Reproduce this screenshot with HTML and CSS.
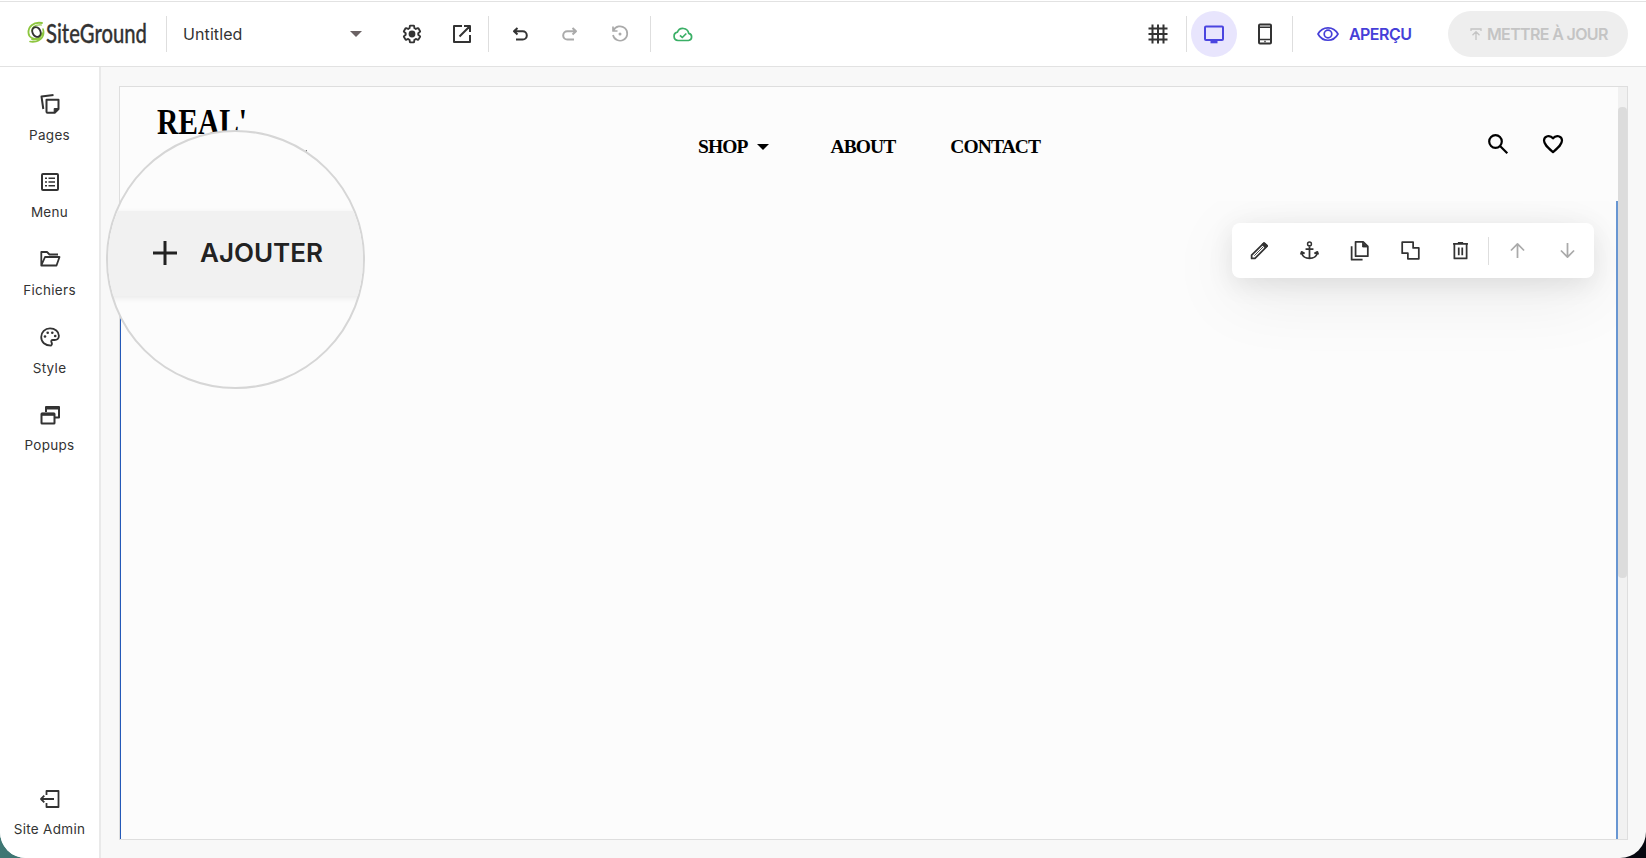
FILE: index.html
```html
<!DOCTYPE html>
<html lang="fr">
  <head>
    <meta charset="UTF-8" />
    <meta name="viewport" content="width=device-width, initial-scale=1.0" />
    <title>SiteGround - Untitled</title>
    <link rel="stylesheet" href="styles.css">
  </head>
  <body>
    <div class="window">
      <header class="topbar">
        <svg class="logo" width="122" height="36" viewBox="0 -2 122 36">
          <g fill="none" stroke-linecap="round">
            <path d="M16 5C7 3.500 2 9 2.500 15c.4 5 6 7 10 5" stroke="#8dc63f" stroke-width="1.800" />
            <path d="M15.500 7C9 6.500 6 9 5.500 13" stroke="#8dc63f" stroke-width="1.200" />
            <path d="M17 11c2 6-1 11-7 12.500-2.500.6-4.500.5-6 0M16 15c-1 5-5 7-10 6.500" stroke="#8dc63f" stroke-width="1.600" />
            <ellipse cx="10.500" cy="14" rx="4" ry="5" transform="rotate(-25 10.500 14)" stroke="#333" stroke-width="1.900" />
          </g>
          <text x="20" y="25" class="logo-text" textLength="101" lengthAdjust="spacingAndGlyphs">SiteGround</text>
        </svg>
        <span class="divider"></span>
        <div class="page-select">
          <span>Untitled</span>
          <svg width="12" height="6" viewBox="0 0 12 6"><path d="M0 0h12L6 6z" fill="#6b6264" /></svg>
        </div>
        <button class="tool">
          <svg class="icon" viewBox="0 0 24 24"><path transform="translate(1.900 1.900) scale(.84)" stroke-width="2.200" d="M19.430 12.980c.04-.32.07-.64.07-.98 0-.34-.03-.66-.07-.98l2.110-1.650c.19-.15.24-.42.12-.64l-2-3.460a.5.5 0 0 0-.61-.22l-2.490 1c-.52-.4-1.080-.73-1.690-.98l-.38-2.650A.488.488 0 0 0 14 2h-4c-.25 0-.46.18-.49.42l-.38 2.650c-.61.25-1.170.59-1.690.98l-2.490-1a.5.5 0 0 0-.61.220l-2 3.460c-.13.22-.07.49.12.64l2.110 1.650c-.04.32-.07.65-.07.98 0 .33.03.66.07.98l-2.110 1.650c-.19.15-.24.42-.12.64l2 3.460a.5.5 0 0 0 .61.22l2.490-1c.52.4 1.080.73 1.690.98l.38 2.650c.03.24.24.42.49.42h4c.25 0 .46-.18.49-.42l.38-2.650c.61-.25 1.170-.59 1.690-.98l2.490 1a.5.5 0 0 0 .61-.22l2-3.460c.12-.22.07-.49-.12-.64z" /><circle cx="12" cy="12" r="3.400" fill="currentColor" stroke="none" /></svg>
        </button>
        <button class="tool">
          <svg class="icon" viewBox="0 0 24 24"><path d="M12 4H4v16h16v-7M14 4h6v6M20 4 9.500 14.500" /></svg>
        </button>
        <span class="divider"></span>
        <div class="history">
          <button class="tool">
            <svg class="icon" viewBox="0 0 24 24"><path d="M9.500 6 6 9.300l3.500 3.200M6 9.300h8.700a4 4 0 0 1 0 8.200H8" /></svg>
          </button>
          <button class="tool off">
            <svg class="icon" viewBox="0 0 24 24"><path d="m14.500 6 3.500 3.300-3.500 3.200M18 9.300H9.300a4 4 0 0 0 0 8.200H16" /></svg>
          </button>
          <button class="tool off">
            <svg class="icon thin" viewBox="0 0 24 24"><path d="M5 4.500V9h4.500M5.500 8.500A7.200 7.200 0 1 1 5 13" /><circle cx="12" cy="12" r="1.500" fill="currentColor" stroke="none" /></svg>
          </button>
        </div>
        <span class="divider"></span>
        <button class="tool saved">
          <svg class="icon thin" viewBox="0 0 24 24"><path d="M7 18.500a4.200 4.200 0 0 1-.6-8.300 5.900 5.900 0 0 1 11.300 1.200 3.600 3.600 0 0 1-.2 7.100zM9 13.300l2.300 2.200 4-4" /></svg>
        </button>

        <div class="views">
          <button class="tool">
            <svg class="icon" viewBox="0 0 24 24"><path d="M6.500 2.500v19M12 2.500v19M17.500 2.500v19M2.500 6.500h19M2.500 12h19M2.500 17.500h19" /></svg>
          </button>
          <span class="divider"></span>
          <button class="tool active">
            <svg class="icon" viewBox="0 0 24 24"><rect x="3" y="4.500" width="18" height="13.500" rx="1" /><path d="M8.500 20h7" stroke-width="2.600" /></svg>
          </button>
          <button class="tool">
            <svg class="icon" viewBox="0 0 24 24"><rect x="6" y="2.500" width="12" height="19" rx="1" /><path d="M6 5.300h12M6 17.500h12" stroke-width="1.500" /><path d="M11.300 19.500h1.400" stroke-width="1.300" /></svg>
          </button>
          <span class="divider"></span>
        </div>
        <a class="preview">
          <svg class="icon thin" viewBox="0 0 24 24"><path d="M2 12c4.500-8.300 15.500-8.300 20 0-4.500 8.300-15.500 8.300-20 0z" /><circle cx="12" cy="12" r="3.800" /></svg>
          <span>APERÇU</span>
        </a>
        <button class="update">
          <svg width="12" height="14" viewBox="0 0 12 14" fill="none" stroke="currentColor" stroke-width="1.300"><path d="M1 4V2h10v2M6 13V5M2.500 8.200 6 4.700l3.500 3.500" /></svg>
          <span>METTRE À JOUR</span>
        </button>
      </header>

      <div class="main">
        <nav class="sidebar">
          <a class="side-item">
            <svg class="icon" viewBox="0 0 24 24"><path d="M8.500 7.700h12V17l-3.800 3.700H9.500a1 1 0 0 1-1-1zM5.300 17 3.500 4.500 15.500 3" /><path d="M20.500 16.500h-4.300v4.300z" fill="currentColor" stroke-width="1" /></svg>
            <span>Pages</span>
          </a>
          <a class="side-item">
            <svg class="icon" viewBox="0 0 24 24"><rect x="4" y="4" width="16" height="16" rx="1" /><path d="M7 8.300h2m1.500 0H17M7 12h2m1.500 0H17M7 15.700h2m1.500 0H17" stroke-width="1.600" /></svg>
            <span>Menu</span>
          </a>
          <a class="side-item">
            <svg class="icon" viewBox="0 0 24 24"><path d="M20 7.500h-8.500L9 5H3.300v13.500h15.200l3-8.500H7L3.500 18" stroke-width="1.800" /></svg>
            <span>Fichiers</span>
          </a>
          <a class="side-item">
            <svg class="icon" viewBox="0 0 24 24"><path d="M13 20.600c-6 0-9.800-3.500-9.800-8.600S7 3.400 12 3.400s8.900 3 8.900 7.300c0 3.300-2 4.300-4.300 4.300h-1.800c-1.500 0-1.900 1.100-1.300 2.300.7 1.300.4 2.600-.5 3.300z" stroke-width="1.800" /><g fill="currentColor" stroke="none"><circle cx="7" cy="11.500" r="1.300" /><circle cx="9.700" cy="7.700" r="1.300" /><circle cx="14.300" cy="7.700" r="1.300" /><circle cx="17.200" cy="11" r="1.300" /></g></svg>
            <span>Style</span>
          </a>
          <a class="side-item">
            <svg class="icon" viewBox="0 0 24 24"><path d="M8 9V4h13v10.500h-4" /><path d="M8 5h13" stroke-width="3" /><rect x="3.500" y="10.500" width="13" height="10" rx=".5" /><path d="M3.500 11.300h13" stroke-width="3" /></svg>
            <span>Popups</span>
          </a>
          <a class="side-item admin">
            <svg class="icon" viewBox="0 0 24 24"><path d="M8.500 8V4H20.500v16h-12v-4M16 12H3M6.300 8.700 3 12l3.300 3.300" stroke-width="1.800" /></svg>
            <span>Site Admin</span>
          </a>
        </nav>

        <div class="workspace">
          <div class="canvas">
            <div class="page">
              <div class="site-header">
                <svg class="site-title" width="150" height="50" viewBox="0 0 150 50">
                  <text x="0" y="30" textLength="90" lengthAdjust="spacingAndGlyphs">REAL'</text>
                  <path d="M148.500 46.500h1.500v1.500z" />
                </svg>
                <nav class="site-nav">
                  <a>SHOP <svg width="12" height="6" viewBox="0 0 12 6"><path d="M0 0h12L6 6z" /></svg></a>
                  <a>ABOUT</a>
                  <a>CONTACT</a>
                </nav>
                <div class="site-actions">
                  <svg class="icon heavy" viewBox="0 0 24 24"><circle cx="9.500" cy="9.500" r="6.300" /><path d="m14 14 7.300 7.300" /></svg>
                  <svg class="icon heavy" viewBox="0 0 24 24"><path d="M12 20.200C6.500 15.300 3 12.400 3 8.600 3 3.800 9 2.500 12 6.300c3-3.800 9-2.500 9 2.300 0 3.800-3.500 6.700-9 11.600z" /></svg>
                </div>
              </div>
              <div class="section">
                <div class="section-tools">
                  <button class="tool"><svg class="icon" viewBox="0 0 24 24"><path d="M3 21v-3.800L17 3.500l3.700 3.600L6.800 21z" /><path d="M6 18 16 8" stroke-width="1" /><path d="m15.500 5 2-1.500 3.200 3-2 2z" fill="currentColor" /></svg></button>
                  <button class="tool"><svg class="icon" viewBox="0 0 24 24"><circle cx="12" cy="4.500" r="2.200" stroke-width="1.700" /><path d="M12 7V21.500M7.500 10.300h9M3 13.500c.5 10 17.500 10 18 0M2 16.500l1-3 3.500 2M22 16.500l-1-3-3.500 2" /></svg></button>
                  <button class="tool"><svg class="icon" viewBox="0 0 24 24"><path d="M7.500 2h8.700L21.500 7.300V18.500h-14zM3 7v15.500h12.500" /><path d="M15.500 2.500V8H21z" fill="currentColor" stroke-width="1" /></svg></button>
                  <button class="tool"><svg class="icon" viewBox="0 0 24 24"><path d="M2.500 2.500h12.500v6.500h6.500v12.500H9V15H2.500z" /></svg></button>
                  <button class="tool"><svg class="icon" viewBox="0 0 24 24"><path d="M5 4.500V21h14V4.500M3.500 4.500h17M9 3.300h6M10 8.500V17.500M14 8.500V17.500" /></svg></button>
                  <span class="divider"></span>
                  <button class="tool off"><svg class="icon" viewBox="0 0 24 24"><path d="M12 20.500V4.500M4.500 12 12 4.500l7.500 7.500" /></svg></button>
                  <button class="tool off"><svg class="icon" viewBox="0 0 24 24"><path d="M12 3.500v16M4.500 12l7.500 7.500 7.500-7.500" /></svg></button>
                </div>
              </div>
            </div>
            <div class="scrollbar"><div class="thumb"></div></div>
          </div>
        </div>
      </div>

      <!-- Magnified add button -->
      <div class="lens">
        <div class="lens-band">
          <svg width="24" height="24" viewBox="0 0 24 24"><path d="M12 0v24M0 12h24" stroke="#222" stroke-width="3" /></svg>
          <span>AJOUTER</span>
        </div>
      </div>
    </div>
  </body>
</html>
```
FILE: styles.css
```css
* {
  box-sizing: border-box;
}
body {
  margin: 0;
  height: 858px;
  overflow: hidden;
  font-family: "Inter", sans-serif;
  color: #333;
  background: linear-gradient(90deg, #3f7774, #06070f 50%);
}
button {
  border: none;
  background: none;
  padding: 0;
  font-family: inherit;
}
svg {
  display: block;
  flex: none;
}
.window {
  position: relative;
  display: flex;
  flex-direction: column;
  height: 858px;
  background: #f8f8f8;
  border-radius: 0 0 26px 26px;
  overflow: hidden;
}

/* Icons */
.icon {
  width: 24px;
  height: 24px;
  fill: none;
  stroke: currentColor;
  stroke-width: 2;
  stroke-linejoin: round;
}
.thin {
  stroke-width: 1.7;
}
.heavy {
  stroke-width: 2.2;
}
.tool {
  display: flex;
  align-items: center;
  justify-content: center;
  flex: none;
  width: 50.3px;
  height: 45px;
  color: #333;
}
.off {
  color: #aaa;
}
.divider {
  flex: none;
  width: 1px;
  height: 36px;
  background: #dedede;
}

/* Top bar */
.topbar {
  display: flex;
  align-items: center;
  flex: none;
  height: 67px;
  padding: 1px 18px 0 26px;
  background: #fff;
  border-top: 1px solid #fff;
  border-bottom: 1px solid #e2e2e2;
  box-shadow: inset 0 1px #e2e2e2;
}
.logo {
  margin-right: 18px;
  overflow: visible;
}
.logo-text {
  font-family: "Lato", sans-serif;
  font-size: 26px;
  font-weight: 500;
  fill: #333;
  stroke: #333;
  stroke-width: 0.3;
}
.page-select {
  display: flex;
  align-items: center;
  justify-content: space-between;
  width: 179px;
  margin: 0 25px 0 16px;
  font-size: 16px;
  letter-spacing: 0.1px;
}
.history {
  display: flex;
  margin: 0 5px 0 6px;
}
.saved {
  margin-left: 6px;
  color: #3aaf66;
}
.views {
  display: flex;
  align-items: center;
  margin-left: auto;
}
.views .divider {
  margin: 0 4px 0 3px;
}
.views .active {
  width: 46px;
  height: 46px;
  border-radius: 50%;
  background: #e8e5fd;
  color: #4a45e0;
}
.views .active + .tool {
  width: 55px;
}
.views .divider:last-child {
  margin: 0;
}
.preview {
  display: flex;
  align-items: center;
  gap: 9px;
  width: 155px;
  padding-left: 23px;
  color: #463fd8;
  font-size: 16px;
  font-weight: 600;
  letter-spacing: -0.55px;
}
.update {
  display: flex;
  align-items: center;
  gap: 5px;
  width: 180px;
  height: 46px;
  padding-left: 22px;
  border-radius: 23px;
  background: #eee;
  color: #c4c4c4;
  font-size: 16px;
  font-weight: 600;
  letter-spacing: -0.65px;
  white-space: nowrap;
}

/* Sidebar */
.main {
  display: flex;
  flex: 1;
  min-height: 0;
}
.sidebar {
  display: flex;
  flex-direction: column;
  gap: 25.2px;
  width: 101px;
  padding: 25px 0 19px;
  background: #fff;
  border-right: 2px solid #e9e9e9;
}
.side-item {
  display: flex;
  flex-direction: column;
  align-items: center;
  gap: 8.5px;
  font-size: 13.5px;
  line-height: 20px;
  letter-spacing: 0.3px;
}
.admin {
  margin-top: auto;
}

/* Canvas */
.workspace {
  flex: 1;
  padding: 19px 18px 18px;
}
.canvas {
  display: flex;
  height: 754px;
  border: 1px solid #dedede;
  background: #fcfcfc;
}
.page {
  display: flex;
  flex-direction: column;
  flex: 1;
}
.scrollbar {
  width: 9px;
  padding-top: 20px;
  background: #f1f1f1;
}
.thumb {
  height: 471px;
  border-radius: 4px;
  background: #dcdcdc;
}
.site-header {
  display: grid;
  grid-template-columns: 541px 1fr auto;
  height: 114px;
  padding: 17px 53px 0 37px;
  color: #000;
}
.site-title {
  font: bold 35px "Liberation Serif", serif;
}
.site-nav {
  display: flex;
  align-items: center;
  align-self: start;
  height: 24px;
  margin-top: 31px;
  font: bold 19.5px "Liberation Serif", serif;
  letter-spacing: -0.9px;
}
.site-nav a {
  display: flex;
  align-items: center;
  gap: 9px;
  margin-right: 55px;
}
.site-nav a:first-child {
  margin-right: 62px;
}
.site-actions {
  display: flex;
  gap: 31px;
  margin-top: 28px;
}
.section {
  display: flex;
  align-items: flex-start;
  justify-content: flex-end;
  flex: 1;
  overflow: hidden;
  padding: 22px 22px 0 0;
  border-left: 1px solid #2459b8;
  border-right: 2px solid #6896d2;
}
.section-tools {
  display: flex;
  align-items: center;
  width: 362px;
  height: 55px;
  padding-left: 2px;
  border-radius: 8px;
  background: #fff;
  box-shadow: 0 16px 70px rgba(0, 0, 0, 0.08), 0 6px 26px rgba(0, 0, 0, 0.09);
}
.section-tools .icon {
  width: 21px;
  height: 21px;
}
.section-tools .divider {
  height: 28px;
  margin: 0 3px;
}

/* Lens */
.lens {
  position: absolute;
  left: 106px;
  top: 130px;
  width: 259px;
  height: 259px;
  padding-top: 79px;
  border: 2px solid #d6d6d6;
  border-radius: 50%;
  background: #fcfcfc;
  overflow: hidden;
}
.lens-band {
  display: flex;
  align-items: center;
  gap: 23px;
  height: 85px;
  padding: 0 0 2px 45px;
  background: #f1f1f1;
  box-shadow: 0 2px 6px rgba(0, 0, 0, 0.08);
  color: #222;
  font-size: 26px;
  font-weight: 600;
}
```
